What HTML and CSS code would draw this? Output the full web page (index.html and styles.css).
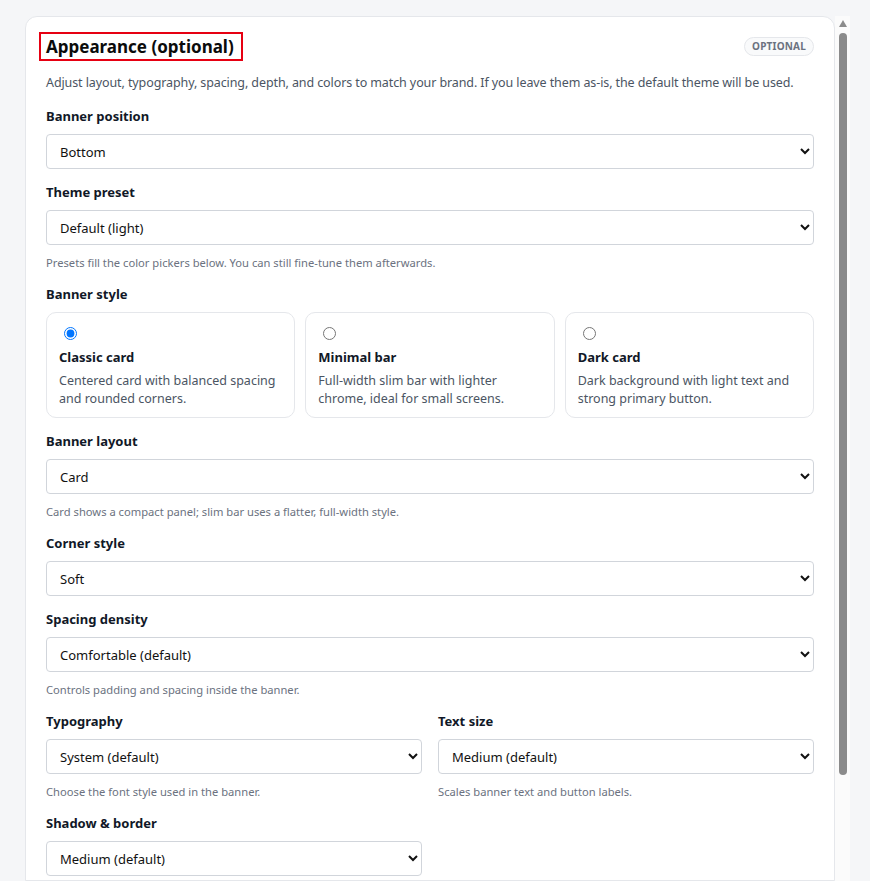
FILE: index.html
```html
<!DOCTYPE html>
<html lang="en">
<head>
<meta charset="utf-8">
<title>Appearance</title>
<link rel="stylesheet" href="styles.css">
</head>
<body>
<div class="frame">
  <main class="card">
    <header class="card-head">
      <h2 class="title">Appearance (optional)</h2>
      <span class="badge">OPTIONAL</span>
    </header>
    <p class="intro">Adjust layout, typography, spacing, depth, and colors to match your brand. If you leave them as-is, the default theme will be used.</p>

    <div class="field">
      <label class="label">Banner position</label>
      <select class="select"><option>Bottom</option></select>
    </div>

    <div class="field">
      <label class="label">Theme preset</label>
      <select class="select"><option>Default (light)</option></select>
      <p class="help">Presets fill the color pickers below. You can still fine-tune them afterwards.</p>
    </div>

    <div class="field">
      <span class="label">Banner style</span>
      <div class="styles">
        <label class="style-card">
          <input type="radio" name="style" checked>
          <span class="style-title">Classic card</span>
          <span class="style-desc">Centered card with balanced spacing and rounded corners.</span>
        </label>
        <label class="style-card">
          <input type="radio" name="style">
          <span class="style-title">Minimal bar</span>
          <span class="style-desc">Full-width slim bar with lighter chrome, ideal for small screens.</span>
        </label>
        <label class="style-card">
          <input type="radio" name="style">
          <span class="style-title">Dark card</span>
          <span class="style-desc">Dark background with light text and strong primary button.</span>
        </label>
      </div>
    </div>

    <div class="field">
      <label class="label">Banner layout</label>
      <select class="select"><option>Card</option></select>
      <p class="help">Card shows a compact panel; slim bar uses a flatter, full-width style.</p>
    </div>

    <div class="field">
      <label class="label">Corner style</label>
      <select class="select"><option>Soft</option></select>
    </div>

    <div class="field">
      <label class="label">Spacing density</label>
      <select class="select"><option>Comfortable (default)</option></select>
      <p class="help">Controls padding and spacing inside the banner.</p>
    </div>

    <div class="row">
      <div class="field">
        <label class="label">Typography</label>
        <select class="select"><option>System (default)</option></select>
        <p class="help">Choose the font style used in the banner.</p>
      </div>
      <div class="field">
        <label class="label">Text size</label>
        <select class="select"><option>Medium (default)</option></select>
        <p class="help">Scales banner text and button labels.</p>
      </div>
    </div>

    <div class="row">
      <div class="field">
        <label class="label">Shadow &amp; border</label>
        <select class="select"><option>Medium (default)</option></select>
      </div>
      <div class="field"></div>
    </div>
  </main>
  <div class="scrollbar" aria-hidden="true">
    <span class="sb-arrow"></span>
    <span class="sb-thumb"></span>
  </div>
</div>
</body>
</html>
```
FILE: styles.css
```css
* { box-sizing: border-box; }
html, body { margin: 0; padding: 0; }
body {
  background: #f5f6f8;
  font-family: "Noto Sans", "Open Sans", sans-serif;
  color: #111827;
  overflow: hidden;
}
.frame {
  display: flex;
  margin: 16px 20px 0 25px;
  height: calc(100vh - 16px);
  overflow: hidden;
}
.scrollbar {
  flex: none;
  width: 15px;
  background: #fbfbfb;
  display: flex;
  flex-direction: column;
  align-items: center;
  padding-left: 1px;
}
.sb-arrow {
  width: 0;
  height: 0;
  margin-top: 4px;
  border-left: 4px solid transparent;
  border-right: 4px solid transparent;
  border-bottom: 7px solid #8b8b8b;
}
.sb-thumb {
  width: 8px;
  height: 742px;
  margin-top: 6px;
  border-radius: 4px;
  background: #8b8b8b;
}
.card {
  flex: 1;
  min-width: 0;
  background: #fff;
  border: 1px solid #e5e7eb;
  border-radius: 12px 12px 0 0;
  padding: 18px 20px 40px 20px;
}
.card-head {
  display: flex;
  justify-content: space-between;
  align-items: center;
}
.title {
  margin: 0 0 0 -4px;
  padding: 0 6px 0 4px;
  font-size: 17px;
  line-height: 23px;
  font-weight: 700;
  color: #0b0b0b;
  outline: 2px solid #e60012;
  outline-offset: 1px;
}
.badge {
  font-size: 10px;
  font-weight: 700;
  letter-spacing: 0.02em;
  color: #6b7280;
  background: #f9fafb;
  border: 1px solid #e5e7eb;
  border-radius: 999px;
  padding: 2px 7px;
  line-height: 13px;
}
.intro {
  margin: 15px 0 14px;
  font-size: 12.5px;
  letter-spacing: -0.1px;
  line-height: 20px;
  color: #4b5563;
}
.field {
  display: flex;
  flex-direction: column;
  margin-bottom: 14px;
  min-width: 0;
}
.label {
  font-size: 13px;
  line-height: 18px;
  font-weight: 700;
  color: #111827;
  margin-bottom: 9px;
}
.select {
  height: 35px;
  width: 100%;
  border: 1px solid #d1d5db;
  border-radius: 4px;
  background: #fff;
  padding: 0 8px 0 9px;
  font-family: inherit;
  font-size: 13px;
  color: #111;
}
.help {
  margin: 10px 0 0;
  font-size: 11.2px;
  line-height: 16px;
  color: #6b7280;
}
.styles {
  display: grid;
  grid-template-columns: repeat(3, 1fr);
  gap: 10px;
}
.style-card {
  display: flex;
  flex-direction: column;
  border: 1px solid #e5e7eb;
  border-radius: 10px;
  padding: 13px 12px 9px;
}
.style-card input {
  margin: 1px 0 0 5px;
  width: 13px;
  height: 13px;
}
.style-title {
  margin-top: 8px;
  font-size: 13px;
  line-height: 18px;
  font-weight: 700;
  color: #111827;
}
.style-desc {
  margin-top: 6px;
  font-size: 12.5px;
  line-height: 18px;
  color: #4b5563;
}
.row {
  display: grid;
  grid-template-columns: 1fr 1fr;
  gap: 16px;
}
```
